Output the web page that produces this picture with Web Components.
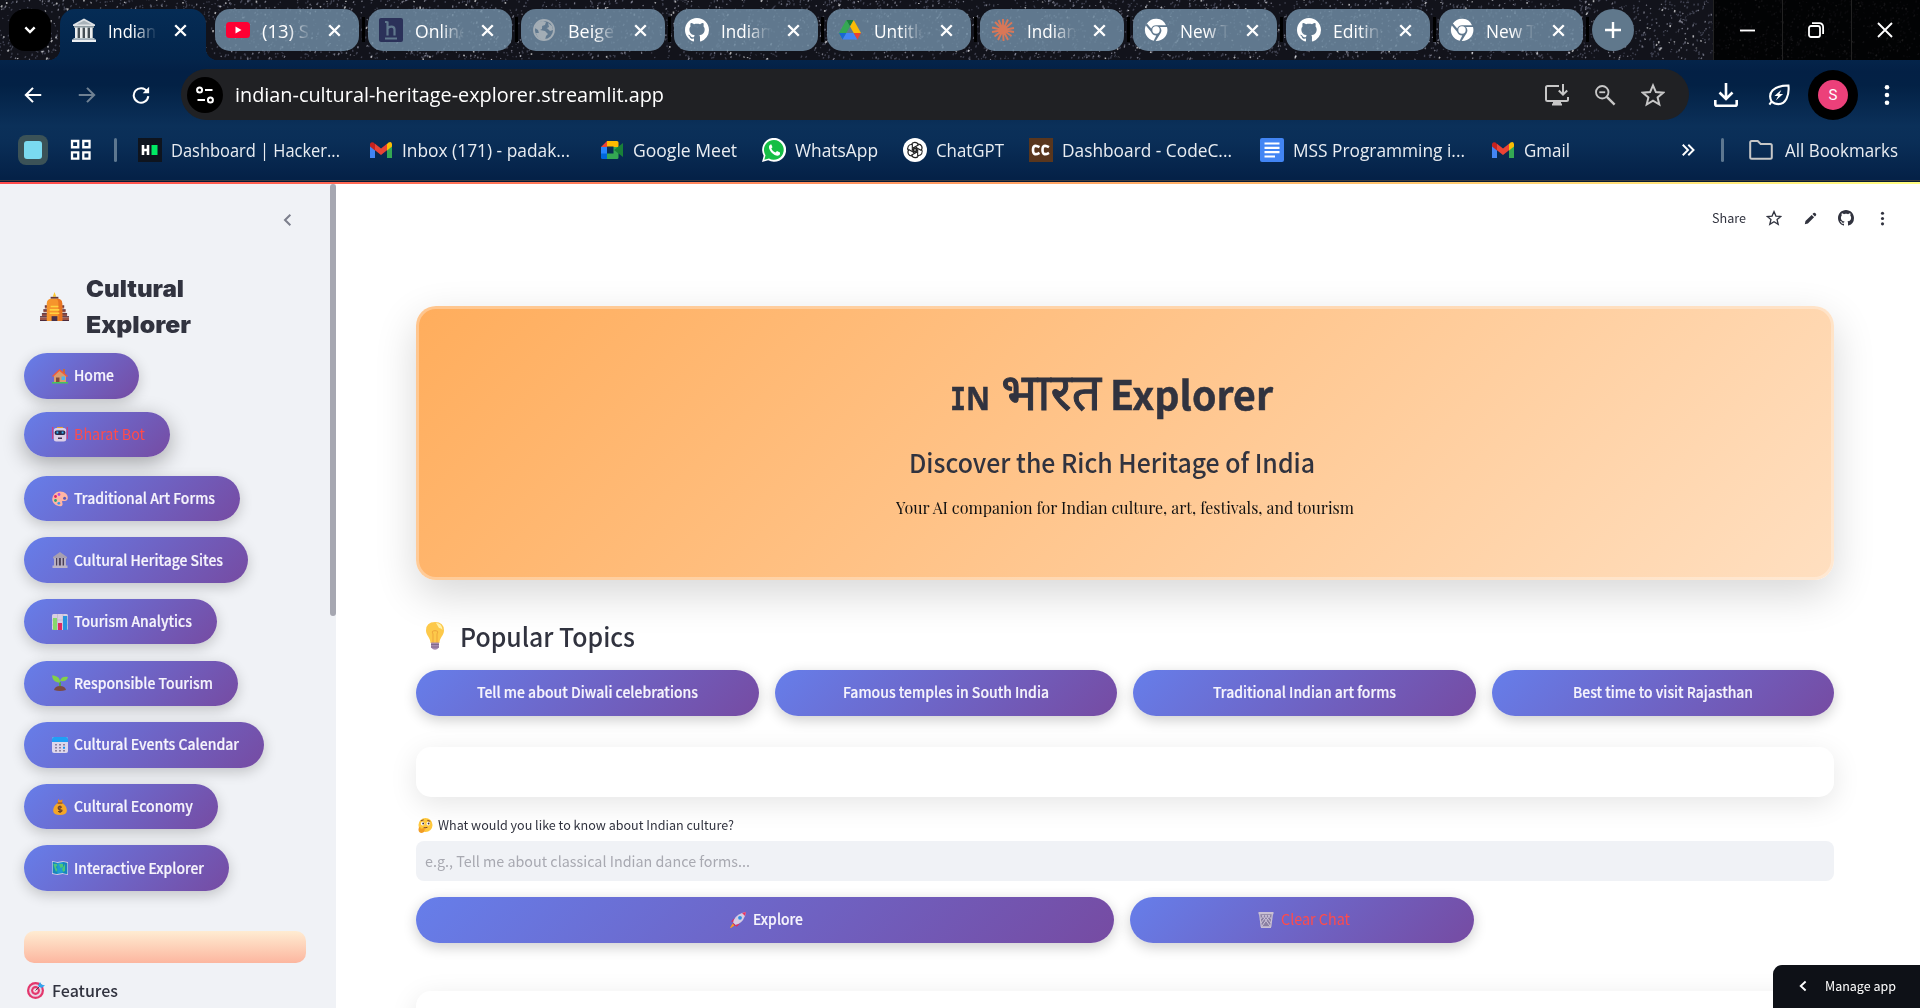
<!DOCTYPE html>
<html lang="en">
<head>
<meta charset="utf-8">
<title>Indian Cultural Heritage Explorer</title>
<style>
html,body{margin:0;height:100%;overflow:hidden;background:#fff}
body{font-family:"Noto Sans CJK SC","Open Sans",sans-serif;color:#31333f}
</style>
</head>
<body>
<app-window></app-window>
<script>
const ICONS = {
  chevdown:['0 0 24 24','<path d="M5 8l7 7 7-7" fill="none" stroke="#fff" stroke-width="3.600"/>'],
  close:['0 0 16 16','<path d="M1.500 1.500l13 13M14.500 1.500l-13 13" fill="none" stroke="#fff" stroke-width="2.900"/>'],
  plus:['0 0 16 16','<path d="M8 0v16M0 8h16" stroke="#fff" stroke-width="2.400"/>'],
  min:['0 0 16 16','<path d="M0 8h16" stroke="#fff" stroke-width="2"/>'],
  max:['0 0 16 16','<rect x="1" y="4" width="11" height="11" rx="2" fill="none" stroke="#fff" stroke-width="1.800"/><path d="M4 1.200h7.500a3.600 3.600 0 0 1 3.600 3.600V12" fill="none" stroke="#fff" stroke-width="1.800"/>'],
  wclose:['0 0 16 16','<path d="M1 1l14 14M15 1L1 15" stroke="#fff" stroke-width="1.900"/>'],
  museum:['0 0 24 24','<path d="M1 6.500L12 .5l11 6v1.500H1z" fill="#dfe3e6"/><path d="M4.500 6.500L12 2.500l7.500 4z" fill="#a9b3ba"/><path d="M2 8h20v2H2z" fill="#8b989f"/><path d="M3 10h18v10H3z" fill="#454f56"/><path d="M3 9.500h2.600V20H3zM8 9.500h2.600V20H8zM13 9.500h2.600V20H13zM18 9.500h2.600V20H18z" fill="#eceff1"/><path d="M1.500 20h21v1.500h-21z" fill="#b0bec5"/><path d="M0 21.500h24V24H0z" fill="#eceff1"/>'],
  youtube:['0 0 24 24','<rect y="4" width="24" height="16" rx="3.500" fill="#ff0033"/><path d="M9.500 8.500v7l6-3.500z" fill="#fff"/>'],
  hletter:['0 0 24 24','<rect width="24" height="24" rx="2" fill="#2b3159"/><path d="M8.500 3.500v14M8.500 11c1-3 7-3.500 7 .5v6M6 4h2.500M6 20.500h12" fill="none" stroke="#60788c" stroke-width="2.200"/>'],
  globe:['0 0 24 24','<circle cx="12" cy="12" r="10" fill="none" stroke="#a3adb5" stroke-width="1.800"/><path d="M3 10c0-4 4-7 8-7l3 1-1 3-3 1v3l-2 1 5 1 3 3-2 2-1 4c-5 0-8-3-9-7l3 0-1-3zM16 5l4 3 1 4-3 1-3-3 2-1z" fill="#a3adb5"/>'],
  github:['0 0 16 16','<path fill="currentColor" fill-rule="evenodd" d="M8 0C3.580 0 0 3.580 0 8c0 3.540 2.290 6.530 5.470 7.590.4.07.55-.17.55-.38 0-.19-.01-.82-.01-1.490-2.010.37-2.530-.49-2.690-.94-.09-.23-.48-.94-.82-1.130-.28-.15-.68-.52-.01-.53.63-.01 1.080.58 1.230.82.72 1.210 1.870.87 2.330.66.07-.52.28-.87.51-1.070-1.780-.2-3.640-.89-3.640-3.950 0-.87.31-1.590.82-2.150-.08-.2-.36-1.020.08-2.120 0 0 .67-.21 2.200.82.64-.18 1.320-.27 2-.27s1.360.09 2 .27c1.530-1.040 2.200-.82 2.200-.82.44 1.100.16 1.920.08 2.120.51.56.82 1.270.82 2.150 0 3.070-1.870 3.750-3.650 3.950.29.25.54.73.54 1.480 0 1.070-.01 1.930-.01 2.200 0 .21.15.46.55.38A8.010 8.010 0 0 0 16 8c0-4.420-3.580-8-8-8z"/>'],
  drive:['0 0 24 24','<path d="M8.300 2h7.400L12 8.500z" fill="#188038"/><path d="M8.300 2L12 8.500 4.700 21 1 15z" fill="#34a853"/><path d="M15.700 2L23 15h-7.300L12 8.500z" fill="#fbbc04"/><path d="M1 15l3.600 6.500L8.400 15z" fill="#1967d2"/><path d="M8.400 15h7.300l3.700 6.500H4.600z" fill="#4285f4"/><path d="M15.700 15H23l-3.600 6.500z" fill="#ea4335"/>'],
  claude:['0 0 24 24','<path d="M12 12L12 1M12 12L17 1.500M12 12L21 4.500M12 12L23 10M12 12L23 14M12 12L20.500 18M12 12L17 22M12 12L12.500 23M12 12L7 22M12 12L3.500 18.500M12 12L1 14M12 12L1 9.500M12 12L4 4M12 12L7.500 2" stroke="#d97757" stroke-width="1.900"/>'],
  chrome:['0 0 24 24','<path d="M2.900 5.600A11 11 0 0 1 22 7.200H12.200a5.200 5.200 0 0 0-5 3.400zM23 9a11 11 0 0 1-11.300 14l5-8A5.400 5.400 0 0 0 16 9zM1.800 7.500a11 11 0 0 0 7.900 15.200l2.600-5.300A5.500 5.500 0 0 1 7 13.800z" fill="#fff"/><circle cx="12" cy="12" r="3.700" fill="#fff"/>'],
  back:['0 0 24 24','<path d="M23 12H3M12 2.500L2.500 12l9.500 9.500" fill="none" stroke="currentColor" stroke-width="2.800"/>'],
  reload:['0 0 24 24','<path d="M20.300 7.500A9.700 9.700 0 1 0 21.700 13.500" fill="none" stroke="#fff" stroke-width="2.700"/><path d="M22.800 1v8.500h-8.500z" fill="#fff"/>'],
  tune:['0 0 24 24','<g fill="none" stroke="#fff" stroke-width="2.400"><circle cx="5.500" cy="6" r="3"/><path d="M12 6h9M3 18h9"/><circle cx="18.500" cy="18" r="3"/></g>'],
  install:['0 0 24 24','<path d="M14 3H2.500Q1 3 1 4.500v12.200Q1 18 2.500 18h19q1.500 0 1.500-1.500V14M7 21.500h10M18 1v10M13.800 7.500L18 11.700l4.200-4.200" fill="none" stroke="#c7c7c7" stroke-width="2"/><path d="M8 18h8v4H8z" fill="#c7c7c7"/>'],
  zoomout:['0 0 24 24','<circle cx="9" cy="9" r="6.800" fill="none" stroke="#c7c7c7" stroke-width="2"/><path d="M14 14l8.500 8.500" stroke="#c7c7c7" stroke-width="2.600"/><path d="M5.800 9h6.400" stroke="#c7c7c7" stroke-width="2"/>'],
  star:['0 0 24 24','<path d="M12 2.400l2.900 6.700 7.200.6-5.500 4.700 1.700 7.100-6.300-3.800-6.300 3.800 1.700-7.100L1.900 9.700l7.200-.6z" fill="none" stroke="currentColor" stroke-width="2"/>'],
  download:['0 0 24 24','<path d="M12 0v15M5.500 9.500L12 16l6.500-6.500M1.300 17v4.200q0 1.500 1.500 1.500h18.400q1.500 0 1.500-1.500V17" fill="none" stroke="#fff" stroke-width="2.600"/>'],
  leaf:['0 0 24 24','<path d="M4 19C-1 10 6 1.500 22.300 1.700 23.500 13 19 22 11.500 22c-3 0-5.500-1-7.500-3zM4.500 18.500L1.500 22.500" fill="none" stroke="#fff" stroke-width="2.300"/><path d="M14.500 6.500L7 13h4l-2.500 5 8-7h-4z" fill="#fff"/>'],
  dots:['0 0 24 24','<g fill="currentColor"><circle cx="12" cy="3.500" r="2.500"/><circle cx="12" cy="12" r="2.500"/><circle cx="12" cy="20.500" r="2.500"/></g>'],
  grid:['0 0 24 24','<path d="M2.200 2.200h6.800v6.800H2.200zM14.500 2.200h6.800v6.800h-6.800zM2.200 14.500h6.800v6.800H2.200zM14.500 14.500h6.800v6.800h-6.800z" fill="none" stroke="#fff" stroke-width="2.500"/>'],
  hacker:['0 0 24 24','<rect width="24" height="24" fill="#0e141e"/><path d="M5 7v10M10 7v10M5 12h5" stroke="#fff" stroke-width="2.600" fill="none"/><path d="M13.500 7h6v10h-6z" fill="#00ea64"/>'],
  gmail:['0 0 24 24','<path d="M1 7v13h5V11z" fill="#4285f4"/><path d="M23 7v13h-5V11z" fill="#34a853"/><path d="M18 6v6.500L23 8.500V6q-.5-3-3.500-1.500z" fill="#fbbc04"/><path d="M1 6v2.500l5 4V6L4.500 4.500Q1.500 3.500 1 6z" fill="#c5221f"/><path d="M6 5.800V12.300L12 17l6-4.700V5.800L12 10.500z" fill="#ea4335"/>'],
  meet:['0 0 24 24','<path d="M1 9h6v7H1z" fill="#2684fc"/><path d="M7 3v6H1z" fill="#ea4335"/><path d="M7 3h10q1.500 0 1.500 1.500V9h-5V8.500H7z" fill="#ffba00"/><path d="M1 15.500h6V21H2.500Q1 21 1 19.500z" fill="#0066da"/><path d="M7 15.500h6.500V9l5 0v10.500q0 1.500-1.500 1.500H7z" fill="#34a853"/><path d="M18.500 8.500L23 5v14l-4.500-3.500L14 12z" fill="#188038"/>'],
  whatsapp:['0 0 24 24','<path d="M0 24l1.700-6.200A12 12 0 1 1 6.200 22.300z" fill="#fff"/><path d="M2.300 21.700l1.200-4.500A9.900 9.900 0 1 1 7 20.500z" fill="#16be45"/><path d="M8.500 6.500c-3 1.500-1 6 1.500 8.500s7 4 8 1v-1.600l-3-1.500-1.500 1.700c-2-.8-3.300-2-4.200-4l1.200-1.400L9.400 6.500z" fill="#fff"/>'],
  chatgpt:['0 0 24 24','<circle cx="12" cy="12" r="12" fill="#fff"/><g fill="none" stroke="#222" stroke-width="1.150" transform="translate(12 12)">' + [0,60,120,180,240,300].map(a => `<path transform="rotate(${a})" d="M-3.700-5.300a3.700 3.700 0 0 1 7 .3L-1.300-2.300V3"/>`).join('') + '</g>'],
  codechef:['0 0 24 24','<rect width="24" height="24" fill="#59361d"/><path d="M10.500 9.200Q4 5.500 4 12t6.500 2.800M20 9.200Q13.500 5.500 13.500 12t6.500 2.800" fill="none" stroke="#fff" stroke-width="2.600"/>'],
  docs:['0 0 24 24','<rect width="24" height="24" rx="2" fill="#4285f4"/><path d="M4.500 5.500h15M4.500 9.800h15M4.500 14.200h15M4.500 18.500h10.500" stroke="#fff" stroke-width="2.200"/>'],
  more:['0 0 24 24','<path d="M3 3l9 9-9 9M12.500 3l9 9-9 9" fill="none" stroke="#fff" stroke-width="3.300"/>'],
  folder:['0 0 24 24','<path d="M1.200 4.500Q1.200 3 2.700 3h6l3 3h9.600q1.500 0 1.500 1.500v11.700q0 1.500-1.500 1.500H2.700q-1.500 0-1.500-1.500z" fill="none" stroke="#c7c7c7" stroke-width="2"/>'],
  chevleft:['0 0 16 16','<path d="M11.500 2L5 8l6.500 6" fill="none" stroke="currentColor" stroke-width="2.500"/>'],
  pencil:['0 0 16 16','<path d="M1 15l.8-3.800 7.600-7.600 3 3L4.800 14.200zM10.400 2.600l1.300-1.300q1-.8 2 0l1 1q.8 1 0 2l-1.300 1.300z" fill="currentColor"/>'],
  temple:['0 0 30 30','<path d="M15 0l1.800 5h-3.600z" fill="#fcc72f"/><path d="M11 5h8v2h-8z" fill="#643a3a"/><path d="M5 14h20v3H5zM3.500 18h23v3h-23zM2 22h26v3H2zM0 26h30v4H0z" fill="#9b5549"/><path d="M5 14.500h20M3.500 18.500h23M2 22.500h26M0 25.500h30M0 29.500h30" stroke="#49283b" stroke-width="1"/><path d="M7 30V12q0-5 5-5h6q5 0 5 5v18z" fill="#f6952c"/><path d="M17 7h2q4 1 4 5v18h-4V12q0-4-2-5z" fill="#e87422"/><path d="M11 15h8M10 18.500h10M10 22h10" stroke="#ffd23f" stroke-width="1.600"/><path d="M12 25h6v5h-6z" fill="#44304a"/>'],
  house:['0 0 16 16','<path d="M11 1h2v4h-2z" fill="#c56b3c"/><path d="M2 7l5.500-5L14 7v8H2z" fill="#d99c6e"/><path d="M0 8l7.500-7L16 8l-1 1L7.500 3 1 9z" fill="#ef5b3c"/><path d="M4 9.500h3.500V15H4z" fill="#804b3a"/><path d="M9.500 8.500h3.500v3.500H9.500z" fill="#4bb7f0"/><path d="M0 14h16v1.500H0z" fill="#45c55b"/>'],
  robot:['0 0 16 16','<path d="M.7 1v12M15.300 1v12" stroke="#d73a7c" stroke-width="1.200"/><path d="M5 1h6v2H5z" fill="#eba42c"/><rect x="1.800" y="2" width="12.400" height="13.500" rx="2.500" fill="#dccfe8"/><rect x="2.600" y="4.500" width="10.800" height="4.500" rx="2" fill="#292a4a"/><path d="M4.500 5.500h1.800v2H4.500zM9.700 5.500h1.800v2H9.700z" fill="#37b7f5"/><path d="M6 11.500h4V13H6z" fill="#453556"/>'],
  palette:['0 0 16 16','<path d="M8 .5C13 .5 16 3.500 15.800 7c-.2 3.500-3.500 3-5.300 3-1.500.2 1.500 3-.8 5C5 16 .2 12.500.2 8A7.700 7.700 0 0 1 8 .5z" fill="#ffb5a3"/><circle cx="7" cy="3.500" r="1.400" fill="#b54de0"/><circle cx="3.500" cy="5.500" r="1.400" fill="#e2245e"/><circle cx="3.500" cy="9.500" r="1.400" fill="#2aa873"/><circle cx="6.800" cy="12.300" r="1.400" fill="#2f9bf0"/><circle cx="12.600" cy="7.200" r="1.500" fill="#5b5bb8"/>'],
  sites:['0 0 16 16','<path d="M1 5l7-5 7 5v1.500H1z" fill="#a79fb0"/><path d="M2 6h12v8H2z" fill="#4a4058"/><path d="M2 6h2v8H2zM5.200 6h1.700v8H5.200zM8.900 6h1.700v8H8.900zM12 6h2v8h-2z" fill="#b8afc0"/><path d="M.5 13.500h15V16H.5z" fill="#bcb4c4"/>'],
  chart:['0 0 16 16','<rect width="16" height="16" rx="1.500" fill="#d9cfe2"/><path d="M0 6h16M0 11h16M5.500 0v16M11 0v16" stroke="#b6abc3" stroke-width=".5"/><path d="M1 4h4v12H1z" fill="#86d96c"/><path d="M6 9h4v7H6z" fill="#e02a62"/><path d="M11 2h4.300v14H11z" fill="#2893e0"/>'],
  plant:['0 0 16 16','<path d="M8 13V7" stroke="#4eae3a" stroke-width="1.800"/><path d="M8 7.500C3 7.500.5 5 0 .5c5 0 8 2 8 7zM8 6c1-4 4-5 8-4-1 4-4 5-8 4z" fill="#83d148"/><path d="M2 15q1-4 6-4t6 4q-6 2-12 0z" fill="#7c4a43"/>'],
  calendar:['0 0 16 16','<rect width="16" height="16" rx="2" fill="#ded7eb"/><path d="M0 5V2q0-2 2-2h12q2 0 2 2v3z" fill="#1fa0f5"/><path d="M3 7h2v1.500H3zM7 7h2v1.500H7zM11 7h2v1.500h-2zM3 10h2v1.500H3zM7 10h2v1.500H7zM3 13h2v1.500H3zM7 13h2v1.500H7zM11 13h2v1.500h-2z" fill="#8c82a0"/><path d="M11 9.700h2v2h-2z" fill="#1c90f0"/>'],
  money:['0 0 16 16','<path d="M6 0l2 1.500L10.500.5 10 4H6z" fill="#e88c22"/><path d="M5.500 4C2 7 1 9 1.200 12q.3 4 6.800 4t6.800-4C15 9 14 7 10.500 4z" fill="#f5a627"/><path d="M5.500 3.500h5v1.200h-5z" fill="#8d4d23"/><path d="M10 8.200Q6 6.800 6.200 9t3.600 2q1 2-3.800 1.500M8 6.500v7.500" fill="none" stroke="#68402c" stroke-width="1.200"/>'],
  map:['0 0 16 16','<path d="M0 1l5.300 1L10.700 1 16 2v13l-5.300-1-5.400 1L0 14z" fill="#d5cce0"/><path d="M.8 2l4.500 1 5.400-1 4.500 1v11l-4.500-1-5.400 1-4.500-1z" fill="#209bd5"/><path d="M5.300 3v11l-4.500-1V2zM10.700 2l4.500 1v11l-4.500-1z" fill="#1785bd"/><path d="M1.500 4q3-1 4 1L4 7l1.500 3L4 12 2.500 8zM7 4l4 0v3L8.500 8zM10 9l3-5v7l-2 1z" fill="#49c77a"/>'],
  target:['0 0 18 18','<circle cx="8.500" cy="9.500" r="8.500" fill="#e3366c"/><circle cx="8.500" cy="9.500" r="6.300" fill="#e8d5e6"/><circle cx="8.500" cy="9.500" r="4.400" fill="#e3366c"/><circle cx="8.500" cy="9.500" r="2.300" fill="#f4dbe4"/><path d="M8.500 9.500L14 4" stroke="#47435f"/><path d="M11 5l2-4 1.500 2.500L18 4.500 14.500 7z" fill="#31a5ee"/>'],
  bulb:['0 0 18 28','<path d="M9 0q9 0 9 8.500c0 5-4.500 7-4.500 12.500h-9C4.500 15.500 0 13.500 0 8.500Q0 0 9 0z" fill="#fdc94a"/><path d="M10 1q6 0 6.500 7-1.500-2-3.500-2z" fill="#fff0a8"/><path d="M7 21V12q-2-3 2-3.500 4 .5 2 3.500v9" fill="none" stroke="#f0a93c" stroke-width="1.100"/><path d="M5 20.500h8v5Q9 30 5 25.500z" fill="#a78bae"/><path d="M5 22.500h8M5 25h8" stroke="#806b8c"/>'],
  think:['0 0 16 16','<circle cx="8" cy="7.500" r="7.500" fill="#ffc83d"/><circle cx="5" cy="6" r="1.900" fill="#fff"/><circle cx="11" cy="6" r="1.900" fill="#fff"/><circle cx="5.500" cy="5.800" r="1" fill="#3f2d35"/><circle cx="11.300" cy="5.800" r="1" fill="#3f2d35"/><path d="M3 3l3-1M10 2.500l3 1M6 10.500l4-.5" stroke="#713d2c"/><path d="M1 10q2-1 2 1.500l5.500-1q.8 1-1.500 1.500.5 3.500-3 4Q.5 16 .5 12z" fill="#f29d25"/>'],
  rocket:['0 0 16 16','<path d="M4.500 6L1 9.500l2.500.5zM10 11.500L6.500 15 6 12.500z" fill="#e32a5a"/><path d="M3 11Q4 4 12 1l4-1-1 4Q12 12 5 13z" fill="#d5cce4"/><path d="M12 1l4-1-1 4z" fill="#ea3361"/><circle cx="10" cy="5.800" r="1.900" fill="#2f8fe5"/><path d="M2.500 10l3.500 3.500-2 .5z" fill="#d9234f"/><path d="M2.500 11.500l2 2-3.500 2.500H0z" fill="#fb9a26"/>'],
  trash:['0 0 16 16','<path d="M1.500 1.500h13L13 16H3z" fill="#8a80a2"/><path d="M4 3l8 11M7 3l6 8M10 3L14 8M12 3L4 14M9 3l-6 8M6 3L2 8" stroke="#d5cbe0" stroke-width=".9"/><path d="M.5 0h15v2.300H.5zM3 14.300h10V16H3zM1 2h1.300L4 15H2.700zM13.700 2H15l-1.700 13H12z" fill="#c9c0d3"/>']
};

/* Registers an element whose shadow root is cloned from a template */
function define(name, html, setup) {
  customElements.define(name, class extends HTMLElement {
    constructor() {
      super();
      this.attachShadow({mode: 'open'});
    }
    connectedCallback() {
      if (this.shadowRoot.childNodes.length) return;
      const t = document.createElement('template');
      t.innerHTML = typeof html === 'function' ? html(this) : html;
      this.shadowRoot.append(t.content.cloneNode(true));
      if (setup) setup(this);
    }
  });
}

/* <ui-icon name size [h] > */
define('ui-icon', el => {
  const [vb, body] = ICONS[el.getAttribute('name')];
  const s = el.getAttribute('size') || 24, h = el.getAttribute('h') || s;
  return `<style>:host{display:block;flex:none;width:${s}px;height:${h}px}svg{display:block}</style><svg width="${s}" height="${h}" viewBox="${vb}" preserveAspectRatio="none">${body}</svg>`;
});

/* Dense, slightly slanted star streaks */
define('star-field', () => {
  let seed = 7;
  const r = () => (seed = (seed * 16807) % 2147483647) / 2147483647;
  const layers = [['#6b6f86', .5, 3600, 1.4], ['#b5b7c8', .6, 1200, 1.3], ['#fff', .65, 350, 1.6]].map(([c, o, n, w]) => {
    let d = '';
    for (let i = 0; i < n; i++) {
      const x = r() * 1920, y = r() * 60;
      d += `M${x.toFixed(1)} ${y.toFixed(1)}l${(r() * 1.6 - .2).toFixed(1)} ${(-r() * 1.8 - .5).toFixed(1)}`;
    }
    return `<path d="${d}" stroke="${c}" stroke-opacity="${o}" stroke-width="${w}" fill="none"/>`;
  }).join('');
  return `<style>:host{display:block;position:absolute;inset:0;background:#12131b}</style><svg width="1920" height="60" style="display:block">${layers}</svg>`;
});

define('browser-tab', el => `<style>
:host{display:flex;align-items:center;box-sizing:border-box;width:144px;height:42px;padding-left:11px;border-radius:15px;background:rgba(110,139,162,.85);color:#fff;flex:none;font:18px "Open Sans",sans-serif}
:host([active]){width:146px;padding:0 0 9px 12px;height:51px;border-radius:15px 15px 0 0;background:linear-gradient(#052c55,#03244a);position:relative}
:host([active])::before,:host([active])::after{content:"";position:absolute;bottom:0;width:12px;height:12px;background:radial-gradient(circle at 0 0,transparent 12px,#03244a 12.500px);left:-12px}
:host([active])::after{left:auto;right:-12px;background:radial-gradient(circle at 100% 0,transparent 12px,#03244a 12.500px)}
.t{width:50px;margin:2px 16px 0 12px;overflow:hidden;white-space:nowrap;-webkit-mask:linear-gradient(90deg,#000 52%,transparent 98%);mask:linear-gradient(90deg,#000 52%,transparent 98%);line-height:26px}
</style><ui-icon name="${el.getAttribute('icon')}" size="24"></ui-icon><div class="t"><slot></slot></div><ui-icon name="close" size="13"></ui-icon>`);

define('tab-strip', `<style>
:host{display:block;position:relative;height:60px}
.row{position:relative;display:flex;align-items:flex-start;height:51px;padding:9px 0 0 9px}
.menu{width:42px;height:42px;border-radius:16px;background:#000;display:grid;place-items:center;margin-right:9px}
.s{width:3px;height:25px;margin:8px 3px 0;background:#000}
browser-tab[active]{margin-right:9px}
.add{width:42px;height:42px;border-radius:50%;background:#60788c;display:grid;place-items:center}
.win{display:flex;margin:-9px 0 0 auto}
.win div{width:69px;height:60px;box-sizing:border-box;padding-right:2px;background:rgba(0,0,0,.84);display:grid;place-items:center;border-left:1px solid #222}
</style><star-field></star-field>
<div class="row"><div class="menu"><ui-icon name="chevdown" size="16"></ui-icon></div>
<browser-tab active icon="museum"><fit-text w="48">Indian</fit-text></browser-tab>
<browser-tab icon="youtube"><fit-text w="47">(13) S</fit-text></browser-tab><i class="s"></i>
<browser-tab icon="hletter"><fit-text w="54">Online</fit-text></browser-tab><i class="s"></i>
<browser-tab icon="globe"><fit-text w="46">Beige</fit-text></browser-tab><i class="s"></i>
<browser-tab icon="github"><fit-text w="50">Indian</fit-text></browser-tab><i class="s"></i>
<browser-tab icon="drive"><fit-text w="54">Untitle</fit-text></browser-tab><i class="s"></i>
<browser-tab icon="claude"><fit-text w="50">Indian</fit-text></browser-tab><i class="s"></i>
<browser-tab icon="chrome"><fit-text w="50">New T</fit-text></browser-tab><i class="s"></i>
<browser-tab icon="github"><fit-text w="56">Editing</fit-text></browser-tab><i class="s"></i>
<browser-tab icon="chrome"><fit-text w="50">New T</fit-text></browser-tab><i class="s"></i>
<div class="add"><ui-icon name="plus" size="16"></ui-icon></div>
<div class="win"><div><ui-icon name="min" size="15"></ui-icon></div><div><ui-icon name="max" size="16"></ui-icon></div><div><ui-icon name="wclose" size="16"></ui-icon></div></div></div>`);

define('tool-bar', `<style>
:host{display:flex;align-items:center;height:69px;box-sizing:border-box;color:#fff}
.nav{display:flex;gap:36px;padding-left:24px;width:157px;flex:none}
.fw{color:#6f8193}
.box{display:flex;align-items:center;width:1508px;height:51px;border-radius:26px;background:#202124;box-sizing:border-box;padding:0 24px 0 6px;color:#c7c7c7}
.info{width:36px;height:36px;border-radius:50%;background:#000;display:grid;place-items:center;margin-right:12px}
.url{font:20px/30px "Open Sans",sans-serif;color:#fff}
.r{display:flex;align-items:center;gap:25px;margin-left:auto}
.av{width:50px;height:50px;border-radius:50%;background:#000;display:grid;place-items:center}
.av b{width:30px;height:30px;border-radius:50%;background:#ec407a;font:400 15px/30px Roboto,sans-serif;text-align:center}
.x{display:flex;align-items:center;margin-left:25px}
</style><div class="nav"><ui-icon name="back" size="18"></ui-icon><ui-icon class="fw" name="back" size="18" style="transform:scaleX(-1)"></ui-icon><ui-icon name="reload" size="18"></ui-icon></div>
<div class="box"><div class="info"><ui-icon name="tune" size="20"></ui-icon></div><div class="url"><fit-text w="429">indian-cultural-heritage-explorer.streamlit.app</fit-text></div>
<div class="r"><ui-icon name="install" size="24"></ui-icon><ui-icon name="zoomout" size="22"></ui-icon><ui-icon name="star" size="24"></ui-icon></div></div>
<div class="x"><ui-icon name="download" size="24"></ui-icon><ui-icon name="leaf" size="22" style="margin:0 18px 0 30px"></ui-icon><div class="av"><b>S</b></div><ui-icon name="dots" size="22" style="margin-left:18px"></ui-icon></div>`);

define('book-mark', el => `<style>:host{display:flex;align-items:center;gap:9px;font:18px/26px "Open Sans",sans-serif;color:#e9edf2;white-space:nowrap;flex:none}</style><ui-icon name="${el.getAttribute('icon')}" size="24"></ui-icon><fit-text w="${el.getAttribute('w')}"><slot></slot></fit-text>`);

define('bookmarks-bar', `<style>
:host{display:flex;align-items:center;height:51px;padding:0 22px 10px 18px;box-sizing:border-box}
.tile{width:30px;height:30px;border-radius:8px;background:#3b5257;display:grid;place-items:center;margin-right:22px}
.tile i{width:18px;height:18px;border-radius:3px;background:#7adaf0}
.s{width:3px;height:24px;border-radius:2px;background:#5d7790}
</style><div class="tile"><i></i></div><ui-icon name="grid" size="22"></ui-icon><div class="s" style="margin:0 21px 0 22px"></div>
<book-mark icon="hacker" w="169">Dashboard | Hacker...</book-mark>
<book-mark icon="gmail" w="168" style="margin-left:29px">Inbox (171) - padak...</book-mark>
<book-mark icon="meet" w="104" style="margin-left:30px">Google Meet</book-mark>
<book-mark icon="whatsapp" w="83" style="margin-left:25px">WhatsApp</book-mark>
<book-mark icon="chatgpt" w="68" style="margin-left:25px">ChatGPT</book-mark>
<book-mark icon="codechef" w="170" style="margin-left:25px">Dashboard - CodeC...</book-mark>
<book-mark icon="docs" w="172" style="margin-left:28px">MSS Programming i...</book-mark>
<book-mark icon="gmail" w="46" style="margin-left:26px">Gmail</book-mark>
<ui-icon name="more" size="14" style="margin-left:auto"></ui-icon><div class="s" style="margin:0 25px 0 26px"></div>
<book-mark icon="folder" w="113" style="gap:12px">All Bookmarks</book-mark>`);

define('browser-chrome', `<style>:host{display:block;height:184px;flex:none}
.b{height:120px;background:linear-gradient(#04244a 0,#032045 12px,#032145 25px,#0b3059 66px,#0a2e57 82px,#042147 118px)}
.l{height:2px;background:linear-gradient(#3a3c40 50%,#071b38 50%)}
.g{height:2px;background:linear-gradient(90deg,#ff4b4b,#ffb86a 66%,#fffd80)}
</style><tab-strip></tab-strip><div class="b"><tool-bar></tool-bar><bookmarks-bar></bookmarks-bar></div><div class="l"></div><div class="g"></div>`);

define('pill-button', el => {
  const ic = el.getAttribute('icon');
  return `<style>
:host{display:flex;align-items:center;justify-content:center;gap:7px;box-sizing:border-box;height:45.500px;border-radius:23px;background:linear-gradient(135deg,#667eea,#764ba2);box-shadow:0 4px 14px rgba(0,0,0,.2);color:#f6f4fc;font-size:15px;font-weight:500;line-height:22px;white-space:nowrap;-webkit-text-stroke:.2px currentColor}
:host([hot]){color:#ff4b4b;font-weight:400;-webkit-text-stroke:0}
fit-text{margin-top:-1px}
</style>${ic ? `<ui-icon name="${ic}" size="16"></ui-icon>` : ''}<fit-text w="${el.getAttribute('w')}"><slot></slot></fit-text>`;
});

define('side-bar', `<style>
:host{display:block;position:relative;width:336px;height:824px;background:#f0f2f6;flex:none;overflow:hidden}
.col{display:flex;flex-direction:column;align-items:flex-start;padding-left:24px}
.c{height:20px;margin:26px 0 0 257px;color:#7c7f8c}
.brand{display:flex;align-items:center;gap:17px;margin:41px 0 10px 16px;height:72px;font:900 23px/36px Inter,sans-serif}
.brand div{display:flex;flex-direction:column}
pill-button{margin-bottom:16.100px;justify-content:flex-start;padding:0 25px 0 28px;gap:6px}
.box{width:282px;height:32px;border-radius:10px;background:linear-gradient(#ffecd2,#fcb69f);margin-top:24px}
.f{display:flex;align-items:center;gap:7px;margin:14px 0 0 3px;font-size:16px;font-weight:500;line-height:26px}
.bar{position:absolute;right:0;top:0;width:6px;height:432px;border-radius:3px;background:#a6a7b1}
</style><div class="col"><div class="c"><ui-icon name="chevleft" size="13" h="14" style="margin-top:3px"></ui-icon></div>
<div class="brand"><ui-icon name="temple" size="29" style="margin-top:-2px"></ui-icon><div><fit-text w="98">Cultural</fit-text><fit-text w="105">Explorer</fit-text></div></div>
<pill-button icon="house" w="40" style="margin-bottom:13px">Home</pill-button>
<pill-button hot icon="robot" w="71" style="margin-bottom:18.800px;box-shadow:0 6px 22px rgba(0,0,0,.33)">Bharat Bot</pill-button>
<pill-button icon="palette" w="141">Traditional Art Forms</pill-button>
<pill-button icon="sites" w="149">Cultural Heritage Sites</pill-button>
<pill-button icon="chart" w="118">Tourism Analytics</pill-button>
<pill-button icon="plant" w="139">Responsible Tourism</pill-button>
<pill-button icon="calendar" w="165">Cultural Events Calendar</pill-button>
<pill-button icon="money" w="119">Cultural Economy</pill-button>
<pill-button icon="map" w="130">Interactive Explorer</pill-button>
<div class="box"></div><div class="f"><ui-icon name="target" size="18"></ui-icon><fit-text w="66">Features</fit-text></div></div><div class="bar"></div>`);

define('hero-banner', `<style>
:host{display:flex;flex-direction:column;align-items:center;box-sizing:border-box;height:274px;border-radius:20px;border:3px solid rgba(255,255,255,.3);background:linear-gradient(135deg,#ffad5c,#ffdfc0) border-box;box-shadow:0 14px 42px rgba(0,0,0,.16)}
.h{display:flex;align-items:baseline;height:56px;font-size:40px;font-weight:700;line-height:56px;margin:56px 28px 0 0;color:#31333f;-webkit-text-stroke:.5px #31333f}
.i{font:bold 32px/56px "DejaVu Sans Mono"}.n{font:bold 33px/56px "Noto Sans"}
.d{font-family:"Noto Sans Devanagari","Noto Sans",sans-serif;font-size:52px;font-weight:400;-webkit-text-stroke:1px #31333f}
.s{font-size:26px;font-weight:500;line-height:38px;height:38px;margin:22px 26px 0 0}
.p{font:17px/24px "Playfair Display","Liberation Serif",serif;color:#111;margin-top:14px}
</style><div class="h"><fit-text class="i" w="16">I</fit-text><fit-text class="n" w="24">N</fit-text><fit-text class="d" w="100" style="margin:0 9px 0 11px">भारत</fit-text><fit-text w="163">Explorer</fit-text></div>
<div class="s"><fit-text w="406">Discover the Rich Heritage of India</fit-text></div>
<div class="p"><fit-text w="458">Your AI companion for Indian culture, art, festivals, and tourism</fit-text></div>`);

define('app-header', `<style>:host{display:flex;align-items:center;justify-content:flex-end;height:24px;margin-top:22px;padding-right:29px;font-size:12.500px;line-height:24px}</style>
<fit-text w="34">Share</fit-text><ui-icon name="star" size="16" style="margin-left:20px"></ui-icon><ui-icon name="pencil" size="13" style="margin:0 21px 0 22px"></ui-icon><ui-icon name="github" size="16"></ui-icon><ui-icon name="dots" size="15" style="margin:0 1px 0 21px"></ui-icon>`);

define('app-main', `<style>
:host{display:block;flex:1;height:824px;overflow:hidden}
.m{display:flex;flex-direction:column;margin:76px 86px 0 80px}
.t{display:flex;align-items:center;gap:16px;margin:36px 0 14px 10px;height:40px;font-size:26px;font-weight:500;line-height:38px}
.q{display:flex;gap:16px}.q pill-button{flex:1 1 0}
.card{height:50px;border-radius:15px;background:#fff;box-shadow:0 7px 28px rgba(0,0,0,.1);margin-top:31.500px}
.l{display:flex;align-items:center;gap:5px;font-size:12.500px;line-height:18px;margin:19px 0 7px 2px}
.in{height:40px;border-radius:8px;background:#f0f2f6;padding-left:9px;font-size:14.600px;line-height:39px;color:#a8a9b1;margin-bottom:16px}
</style><app-header></app-header><div class="m"><hero-banner></hero-banner>
<div class="t"><ui-icon name="bulb" size="18" h="28"></ui-icon><fit-text w="175">Popular Topics</fit-text></div>
<div class="q"><pill-button w="221">Tell me about Diwali celebrations</pill-button><pill-button w="206">Famous temples in South India</pill-button><pill-button w="183">Traditional Indian art forms</pill-button><pill-button w="180">Best time to visit Rajasthan</pill-button></div>
<div class="card"></div>
<div class="l"><ui-icon name="think" size="15"></ui-icon><fit-text w="296">What would you like to know about Indian culture?</fit-text></div>
<div class="in"><fit-text w="325">e.g., Tell me about classical Indian dance forms...</fit-text></div>
<div class="q"><pill-button icon="rocket" w="50" style="flex:0 0 698px;padding-left:2px">Explore</pill-button><pill-button hot icon="trash" w="69" style="flex:0 0 344px;padding-left:3px">Clear Chat</pill-button></div>
<div class="card" style="margin-top:48px"></div></div>`);

define('manage-badge', `<style>:host{position:absolute;right:0;bottom:0;width:147px;height:43px;box-sizing:border-box;border-radius:9px 0 0 0;background:#0e1117;color:#fff;display:flex;align-items:center;padding:0 0 1px 24px;gap:16px;font-size:12.500px;line-height:20px}</style><ui-icon name="chevleft" size="12"></ui-icon><fit-text w="71">Manage app</fit-text>`);

define('app-window', `<style>:host{display:flex;flex-direction:column;width:1920px;height:1008px;position:relative;overflow:hidden}.b{display:flex}</style><browser-chrome></browser-chrome><div class="b"><side-bar></side-bar><app-main></app-main></div><manage-badge></manage-badge>`);

/* Single-line text condensed or widened to a set width */
define('fit-text', `<style>:host{display:inline-block;white-space:nowrap;flex:none}span{display:inline-block;transform-origin:0 50%}</style><span><slot></slot></span>`, el => {
  const w = +el.getAttribute('w'), s = el.shadowRoot.querySelector('span');
  el.style.width = w + 'px';
  const n = s.getBoundingClientRect().width;
  if (n) s.style.transform = `scaleX(${w / n})`;
});
</script>
</body>
</html>
